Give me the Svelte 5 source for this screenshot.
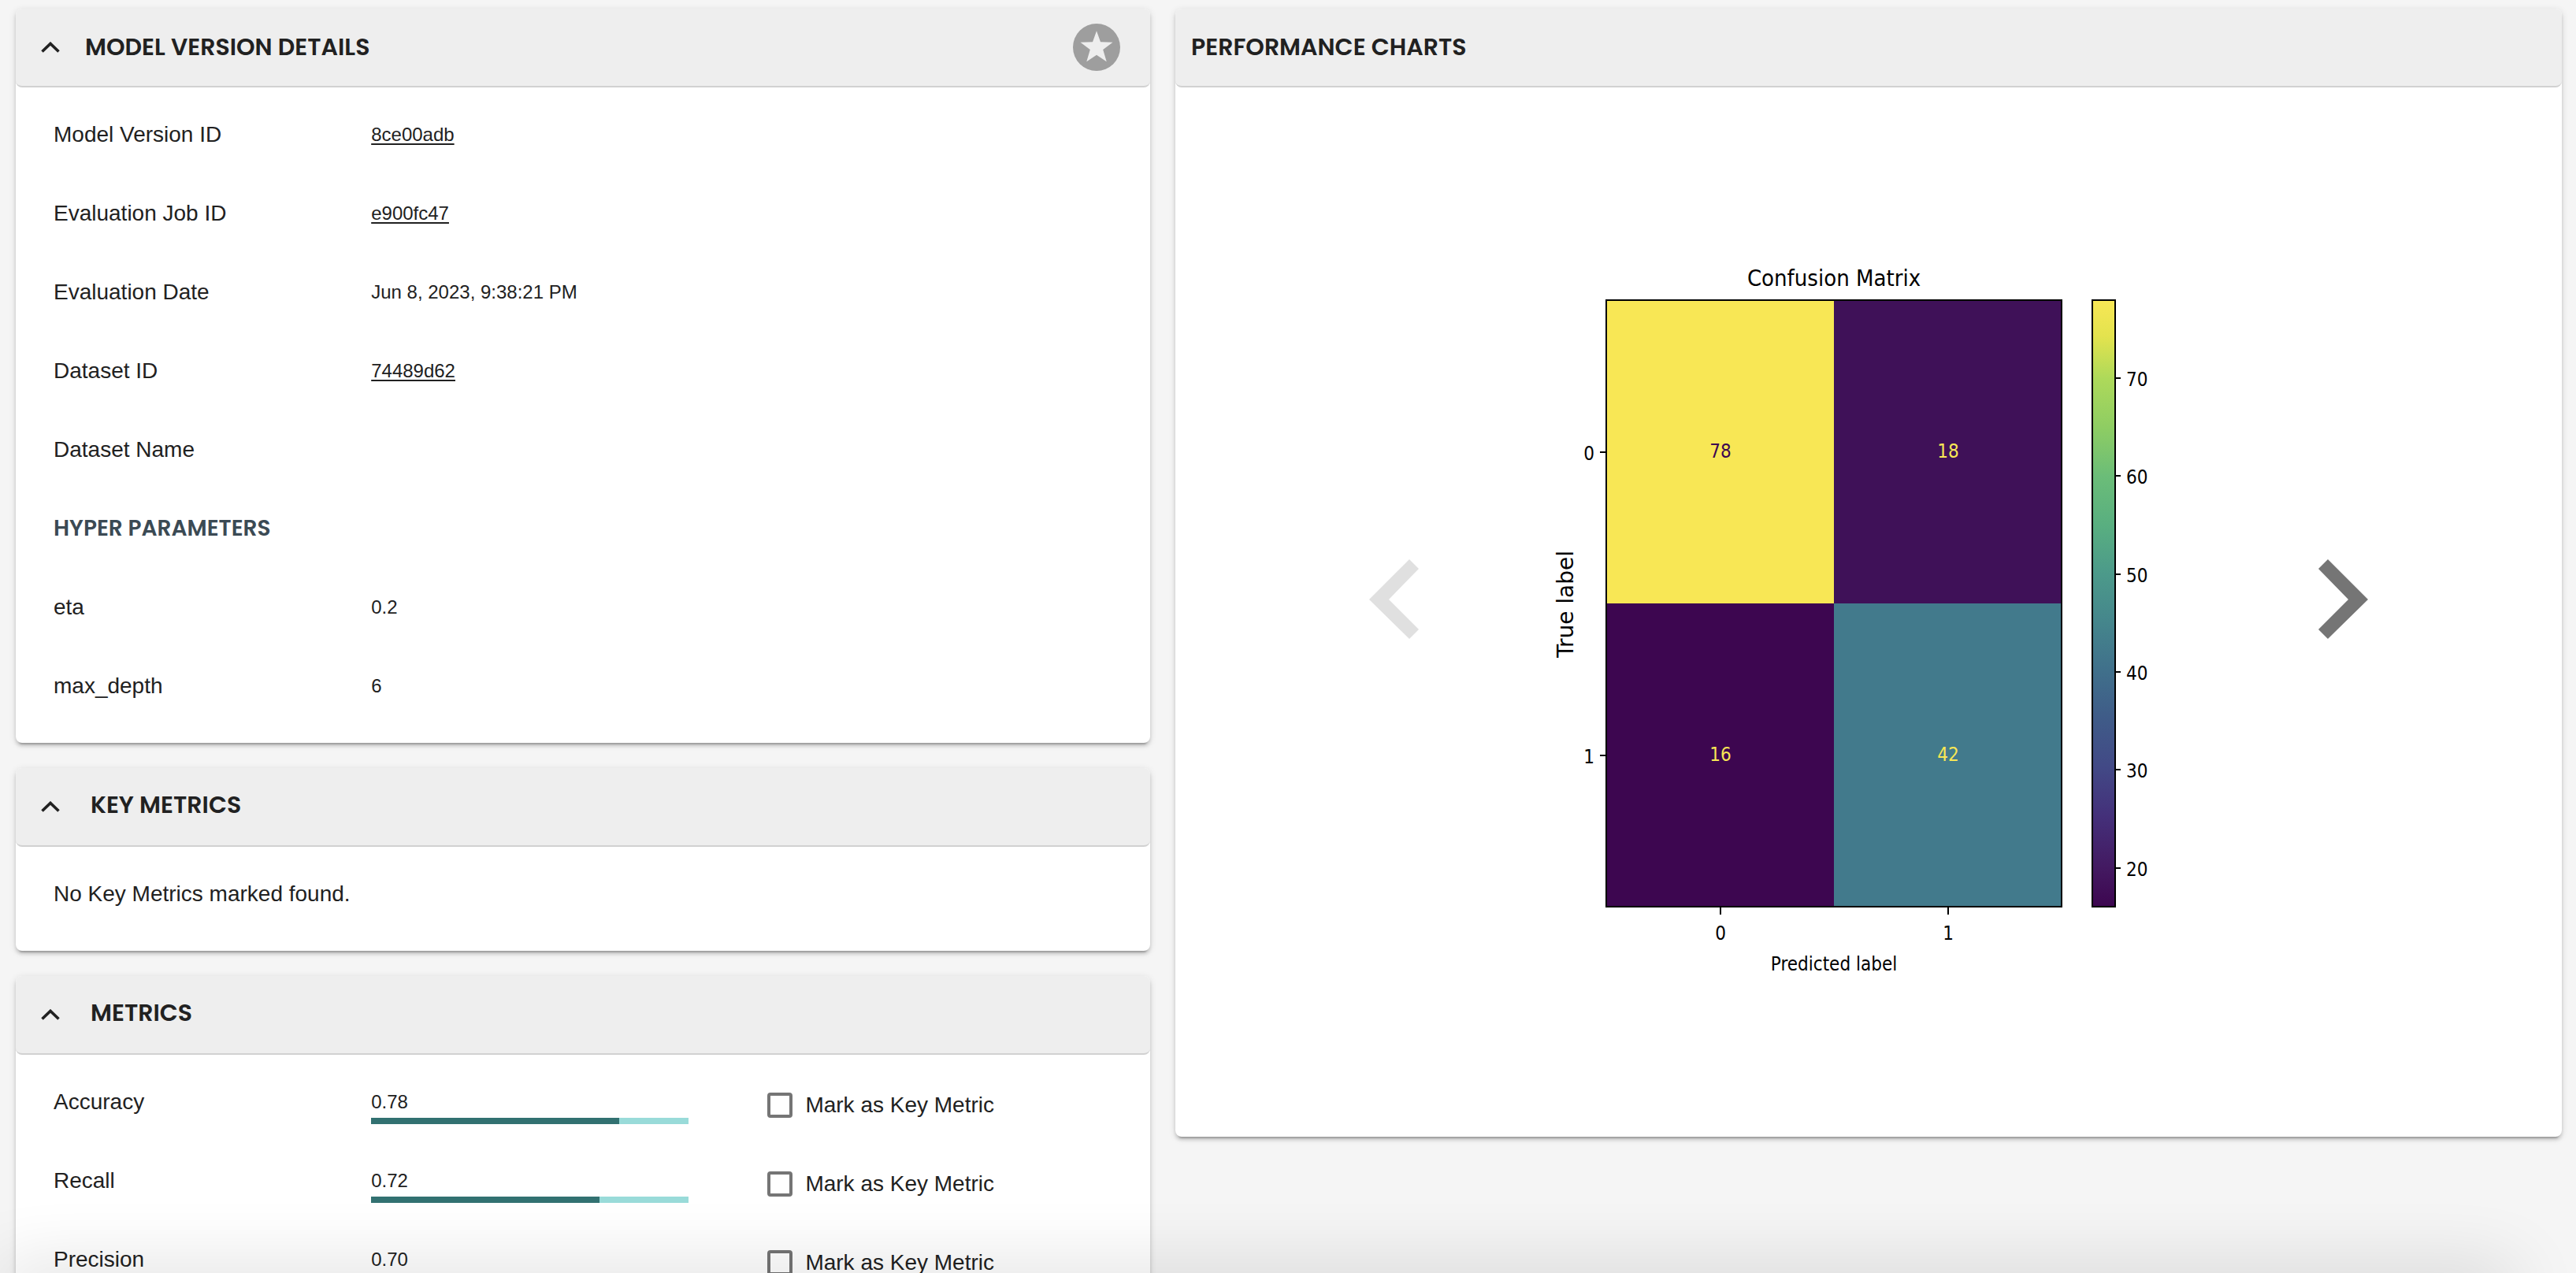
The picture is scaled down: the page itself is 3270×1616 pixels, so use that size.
<script>
  const details = [
    { label: 'Model Version ID', value: '8ce00adb', link: true },
    { label: 'Evaluation Job ID', value: 'e900fc47', link: true },
    { label: 'Evaluation Date', value: 'Jun 8, 2023, 9:38:21 PM' },
    { label: 'Dataset ID', value: '74489d62', link: true },
    { label: 'Dataset Name', value: '' }
  ];
  const hyperParameters = [
    { label: 'eta', value: '0.2' },
    { label: 'max_depth', value: '6' }
  ];
  const metrics = [
    { name: 'Accuracy', value: 0.78 },
    { name: 'Recall', value: 0.72 },
    { name: 'Precision', value: 0.7 }
  ];

  let open = $state({ details: true, key: true, metrics: true });

  // Confusion matrix geometry, in chart units
  const cells = [
    { x: 148, y: 81, value: 78, fill: '#f8e755', ink: '#3d0650' },
    { x: 437, y: 81, value: 18, fill: '#3f1158', ink: '#f8e755' },
    { x: 148, y: 466, value: 16, fill: '#3d0650', ink: '#f8e755' },
    { x: 437, y: 466, value: 42, fill: '#427a8c', ink: '#f8e755' }
  ];
  const scale = [
    [0, '#f8e755'],
    [6, '#e3e34e'],
    [13, '#add95a'],
    [21, '#8ecd63'],
    [29, '#6bbd78'],
    [37, '#59af80'],
    [45, '#4c9a8a'],
    [53, '#45868c'],
    [61, '#40708b'],
    [69, '#3f5b88'],
    [77, '#424986'],
    [85, '#44307a'],
    [94, '#431860'],
    [100, '#3d0650']
  ];
  const ticks = [70, 60, 50, 40, 30, 20];
  const tickY = (v) => Math.round(180 + (70 - v) * 12.43);
</script>

{#snippet chevron()}
  <svg class="chevron" viewBox="0 0 24 14" aria-hidden="true">
    <path d="M1.500 12.500 12 2.400 22.500 12.500" fill="none" stroke="currentColor" stroke-width="3.600" />
  </svg>
{/snippet}

<main class="page">
  <div class="column">
    <section class="card">
      <header class="head">
        <button class="toggle" aria-label="Toggle model version details" onclick={() => (open.details = !open.details)}>
          {@render chevron()}
        </button>
        <h2>MODEL VERSION DETAILS</h2>
        <button class="star" aria-label="Mark as favourite">
          <svg viewBox="0 0 60 60" aria-hidden="true">
            <circle cx="30" cy="30" r="30" fill="#9e9e9e" />
            <path d="M30 9.300l5 13.900 15.500.6-12.300 9.200 4.500 15.200L30 39.800 17.300 48.200l4.500-15.200L9.500 23.800l15.500-.6z" fill="#eee" />
          </svg>
        </button>
      </header>
      {#if open.details}
        <div class="body">
          <dl>
            {#each details as row}
              <div class="row">
                <dt>{row.label}</dt>
                <dd>{#if row.link}<a href={`#${row.value}`}>{row.value}</a>{:else}{row.value}{/if}</dd>
              </div>
            {/each}
          </dl>
          <h3>HYPER PARAMETERS</h3>
          <dl>
            {#each hyperParameters as row}
              <div class="row">
                <dt>{row.label}</dt>
                <dd>{row.value}</dd>
              </div>
            {/each}
          </dl>
        </div>
      {/if}
    </section>

    <section class="card">
      <header class="head compact">
        <button class="toggle" aria-label="Toggle key metrics" onclick={() => (open.key = !open.key)}>
          {@render chevron()}
        </button>
        <h2>KEY METRICS</h2>
      </header>
      {#if open.key}
        <div class="body">
          <p class="row">No Key Metrics marked found.</p>
        </div>
      {/if}
    </section>

    <section class="card">
      <header class="head compact">
        <button class="toggle" aria-label="Toggle metrics" onclick={() => (open.metrics = !open.metrics)}>
          {@render chevron()}
        </button>
        <h2>METRICS</h2>
      </header>
      {#if open.metrics}
        <div class="body">
          {#each metrics as metric}
            <div class="row">
              <span>{metric.name}</span>
              <div class="measure">
                <span>{metric.value.toFixed(2)}</span>
                <div class="track"><div class="fill" style:width={`${metric.value * 100}%`}></div></div>
              </div>
              <label class="mark"><input type="checkbox" />Mark as Key Metric</label>
            </div>
          {/each}
        </div>
      {/if}
    </section>
  </div>

  <section class="card">
    <header class="head plain">
      <h2>PERFORMANCE CHARTS</h2>
    </header>
    <div class="carousel">
      <button class="arrow" aria-label="Previous chart" disabled>
        <svg viewBox="0 0 64 102" aria-hidden="true"><path d="M51 0 63 12 25 51 63 89 51 101 0 51z" fill="currentColor" /></svg>
      </button>
      <svg class="chart" viewBox="1 1 960 920" role="img" aria-label="Confusion Matrix">
        <defs>
          <linearGradient id="viridis" x1="0" y1="0" x2="0" y2="1">
            {#each scale as [offset, color]}
              <stop offset={`${offset}%`} stop-color={color} />
            {/each}
          </linearGradient>
        </defs>
        <text class="title" x="437" y="63">Confusion Matrix</text>
        {#each cells as cell}
          <rect x={cell.x} y={cell.y} width="289" height="385" fill={cell.fill} />
          <text x={cell.x + 145} y={cell.y + 200} fill={cell.ink}>{cell.value}</text>
        {/each}
        <rect class="frame" x="148" y="81" width="578" height="770" />
        <rect class="frame" x="765" y="81" width="29" height="770" fill="url(#viridis)" />
        <path class="tick" d="M140 274h8M140 659h8M293 851v10M582 851v10" />
        <text x="126" y="284">0</text>
        <text x="126" y="669">1</text>
        <text x="293" y="893">0</text>
        <text x="582" y="893">1</text>
        <text x="437" y="932">Predicted label</text>
        <text class="side" x="106" y="467" transform="rotate(-90 106 467)">True label</text>
        {#each ticks as tick}
          <path class="tick" d={`M794 ${tickY(tick)}h7`} />
          <text class="start" x="808" y={tickY(tick) + 10}>{tick}</text>
        {/each}
      </svg>
      <button class="arrow" aria-label="Next chart">
        <svg viewBox="0 0 64 102" aria-hidden="true"><path d="M13 0 1 12 39 51 1 89 13 101 64 51z" fill="currentColor" /></svg>
      </button>
    </div>
  </section>
  <div class="shade"></div>
</main>

<style>
  :global(body) {
    background: #f5f5f5;
  }
  .page {
    box-sizing: border-box;
    height: 100vh;
    overflow: hidden;
    display: grid;
    grid-template-columns: 9fr 11fr;
    gap: 32px;
    align-items: start;
    padding: 11px 18px 0 20px;
    font-family: 'Liberation Sans', Arial, sans-serif;
    font-size: 28px;
    line-height: 32px;
    color: #212121;
  }
  .column {
    display: grid;
    gap: 32px;
  }
  .card {
    background: #fff;
    border-radius: 8px;
    box-shadow:
      0 6px 2px -4px rgba(0, 0, 0, 0.2),
      0 4px 4px rgba(0, 0, 0, 0.14),
      0 2px 10px rgba(0, 0, 0, 0.12);
  }
  .head {
    box-sizing: border-box;
    height: 100px;
    display: flex;
    align-items: center;
    padding: 0 38px 0 32px;
    background: #eee;
    border-bottom: 2px solid #d1d1d1;
    border-radius: 8px;
  }
  .head.plain {
    padding-left: 20px;
  }
  h2,
  h3 {
    margin: 0;
    font-family: Poppins, Lato, sans-serif;
    font-weight: 600;
  }
  h2 {
    font-size: 30px;
    line-height: 40px;
  }
  h3 {
    font-size: 28px;
    line-height: 100px;
    color: #3b4a54;
  }
  button {
    display: flex;
    padding: 0;
    border: 0;
    background: none;
    color: inherit;
    cursor: pointer;
  }
  .toggle {
    margin-right: 32px;
  }
  .compact .toggle {
    margin-right: 39px;
  }
  .compact h2 {
    padding-bottom: 4px;
  }
  .chevron {
    width: 24px;
    height: 14px;
  }
  .star {
    margin-left: auto;
  }
  .star svg {
    width: 60px;
    height: 60px;
  }
  .body {
    padding: 10px 48px 22px;
  }
  dl,
  dd,
  p {
    margin: 0;
  }
  .row {
    height: 100px;
    display: grid;
    grid-template-columns: 30% 30% 1fr;
    align-items: center;
  }
  p.row {
    grid-template-columns: 1fr;
  }
  dd,
  .measure {
    font-size: 24px;
    line-height: 28px;
    white-space: nowrap;
  }
  a {
    color: inherit;
    text-decoration-thickness: 2px;
    text-underline-offset: 3px;
  }
  .measure {
    display: grid;
    gap: 6px;
    padding-top: 14px;
  }
  .track {
    height: 8px;
    background: #99dbd9;
  }
  .fill {
    height: 8px;
    background: #327171;
  }
  .mark {
    display: flex;
    align-items: center;
    gap: 16px;
    padding: 8px 0 0 100px;
    white-space: nowrap;
  }
  .mark input {
    appearance: none;
    box-sizing: border-box;
    width: 32px;
    height: 32px;
    margin: 0;
    border: 4px solid #757575;
    border-radius: 4px;
    background: #fff;
  }
  .mark input:checked {
    background: #327171;
  }
  .carousel {
    display: flex;
    align-items: center;
    justify-content: center;
    gap: 90px;
    padding: 190px 32px 222px;
  }
  .arrow {
    color: #757575;
  }
  .arrow:disabled {
    color: #e0e0e0;
  }
  .arrow svg {
    width: 64px;
    height: 102px;
  }
  .chart {
    width: 960px;
    min-width: 0;
    overflow: visible;
  }
  .chart text {
    font-family: 'DejaVu Sans Condensed', 'DejaVu Sans', sans-serif;
    font-size: 24px;
    text-anchor: middle;
  }
  .chart .title {
    font-size: 29px;
  }
  .chart .side {
    font-family: 'DejaVu Sans', sans-serif;
    font-size: 28px;
  }
  .chart .start {
    text-anchor: start;
  }
  .frame {
    fill: none;
    stroke: #000;
    stroke-width: 2;
  }
  .frame[fill] {
    fill: url(#viridis);
  }
  .tick {
    stroke: #000;
    stroke-width: 2;
  }
  .shade {
    position: fixed;
    left: 0;
    right: 80px;
    bottom: -40px;
    height: 40px;
    box-shadow: 0 0 90px rgba(0, 0, 0, 0.2);
    pointer-events: none;
  }
</style>
